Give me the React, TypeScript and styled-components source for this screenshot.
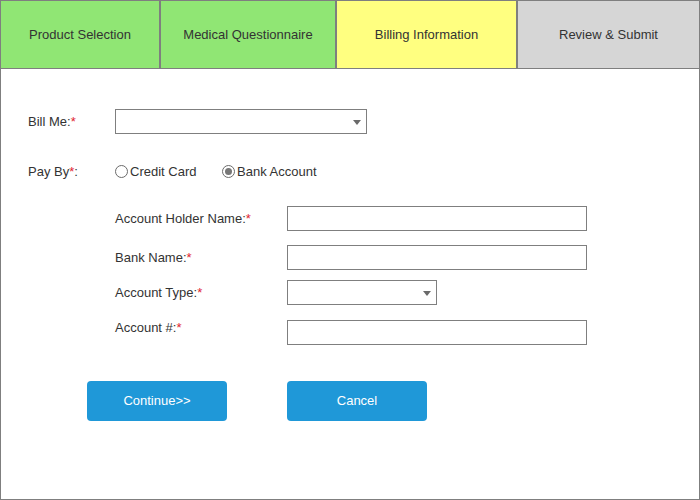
import React from "react";
import styled, { createGlobalStyle } from "styled-components";

const Global = createGlobalStyle`
  html, body { margin: 0; padding: 0; background: #fff; }
  body { font-family: "Liberation Sans", Arial, sans-serif; }
  * { box-sizing: border-box; }
`;

const Frame = styled.div`
  width: 700px;
  height: 500px;
  border: 1px solid #7f7f7f;
  display: flex;
  flex-direction: column;
  font-size: 13px;
  color: #333;
`;

const TabBar = styled.div`
  display: flex;
  height: 68px;
  border-bottom: 1px solid #7f7f7f;
`;

const Tab = styled.div<{ $w: number; $bg: string; $last?: boolean }>`
  width: ${(p) => p.$w}px;
  background: ${(p) => p.$bg};
  border-right: ${(p) => (p.$last ? "none" : "2px solid #7f7f7f")};
  display: flex;
  align-items: center;
  justify-content: center;
  font-size: 13px;
  color: #333;
  padding-bottom: 1px;
`;

const Form = styled.div`
  display: flex;
  flex-direction: column;
  padding: 40px 0 0 27px;
`;

const Row = styled.div<{ $gap: number; $indent?: number }>`
  display: flex;
  align-items: center;
  margin-top: ${(p) => p.$gap}px;
  margin-left: ${(p) => p.$indent ?? 0}px;
`;

const Label = styled.div<{ $w: number; $shift?: number }>`
  width: ${(p) => p.$w}px;
  flex: none;
  position: relative;
  top: ${(p) => p.$shift ?? 0}px;
`;

const Req = styled.span`
  color: #e0242f;
`;

const TextBox = styled.div<{ $w: number }>`
  width: ${(p) => p.$w}px;
  height: 25px;
  border: 1px solid #7f7f7f;
  background: #fff;
`;

const SelectBox = styled.div<{ $w: number }>`
  width: ${(p) => p.$w}px;
  height: 25px;
  border: 1px solid #7f7f7f;
  background: #fff;
  display: flex;
  align-items: center;
  justify-content: flex-end;
  padding-right: 5px;
`;

const Caret = styled.span`
  width: 0;
  height: 0;
  border-left: 4.5px solid transparent;
  border-right: 4.5px solid transparent;
  border-top: 5px solid #6a6a6a;
  margin-top: 1px;
`;

const RadioGroup = styled.div`
  display: flex;
  align-items: center;
  height: 20px;
`;

const RadioItem = styled.label<{ $w: number }>`
  display: flex;
  align-items: center;
  width: ${(p) => p.$w}px;
  gap: 2px;
`;

const RadioCircle = styled.span<{ $on?: boolean }>`
  width: 13px;
  height: 13px;
  border-radius: 50%;
  border: 1px solid #6b6b6b;
  background: #fff;
  display: flex;
  align-items: center;
  justify-content: center;
  &::after {
    content: "";
    display: ${(p) => (p.$on ? "block" : "none")};
    width: 7px;
    height: 7px;
    border-radius: 50%;
    background: #777;
  }
`;

const Buttons = styled.div`
  display: flex;
  gap: 60px;
  margin: 36px 0 0 86px;
`;

const Button = styled.button`
  width: 140px;
  height: 40px;
  border: none;
  border-radius: 4px;
  background: #1f98d8;
  color: #fff;
  font-family: "Liberation Sans", Arial, sans-serif;
  font-size: 13px;
  padding: 0 0 2px;
`;

export default function App() {
  return (
    <>
      <Global />
      <Frame>
        <TabBar>
          <Tab $w={160} $bg="#90e674">Product Selection</Tab>
          <Tab $w={176} $bg="#90e674">Medical Questionnaire</Tab>
          <Tab $w={181} $bg="#ffff80">Billing Information</Tab>
          <Tab $w={181} $bg="#d6d6d6" $last>Review &amp; Submit</Tab>
        </TabBar>
        <Form>
          <Row $gap={0}>
            <Label $w={87}>
              Bill Me:<Req>*</Req>
            </Label>
            <SelectBox $w={252}>
              <Caret />
            </SelectBox>
          </Row>
          <Row $gap={27}>
            <Label $w={87}>
              Pay By<Req>*</Req>:
            </Label>
            <RadioGroup>
              <RadioItem $w={107}>
                <RadioCircle />
                Credit Card
              </RadioItem>
              <RadioItem $w={110}>
                <RadioCircle $on />
                Bank Account
              </RadioItem>
            </RadioGroup>
          </Row>
          <Row $gap={25} $indent={87}>
            <Label $w={172}>
              Account Holder Name:<Req>*</Req>
            </Label>
            <TextBox $w={300} />
          </Row>
          <Row $gap={14} $indent={87}>
            <Label $w={172}>
              Bank Name:<Req>*</Req>
            </Label>
            <TextBox $w={300} />
          </Row>
          <Row $gap={10} $indent={87}>
            <Label $w={172}>
              Account Type:<Req>*</Req>
            </Label>
            <SelectBox $w={150}>
              <Caret />
            </SelectBox>
          </Row>
          <Row $gap={15} $indent={87}>
            <Label $w={172} $shift={-5}>
              Account #:<Req>*</Req>
            </Label>
            <TextBox $w={300} />
          </Row>
        </Form>
        <Buttons>
          <Button>Continue&gt;&gt;</Button>
          <Button>Cancel</Button>
        </Buttons>
      </Frame>
    </>
  );
}
